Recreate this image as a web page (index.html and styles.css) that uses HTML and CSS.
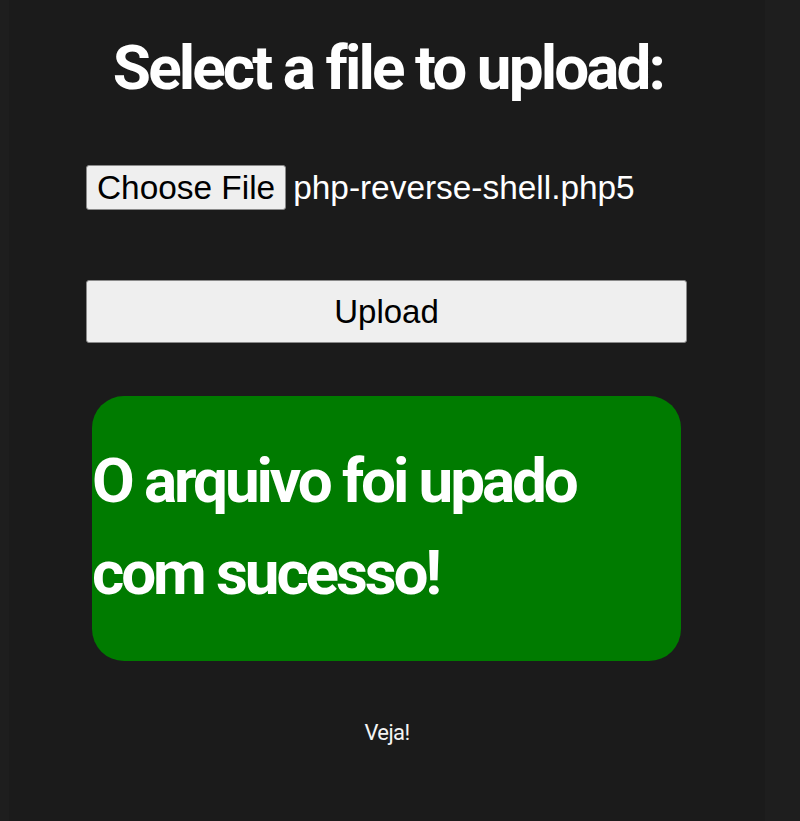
FILE: index.html
```html
<!DOCTYPE html>
<html lang="en">
<head>
<meta charset="utf-8">
<title>Upload</title>
<link rel="stylesheet" href="styles.css">
</head>
<body>
<main class="page">
  <h1 class="title">Select a file to upload:</h1>
  <form class="upload-form">
    <div class="file-row">
      <button type="button" class="file-btn">Choose File</button>
      <span class="file-name">php-reverse-shell.php5</span>
    </div>
    <button type="button" class="upload-btn">Upload</button>
  </form>
  <div class="success">
    <p class="success-text">O arquivo foi upado com sucesso!</p>
  </div>
  <p class="veja">Veja!</p>
</main>
</body>
</html>
```
FILE: styles.css
```css
html, body {
  margin: 0;
  padding: 0;
  background: #1e1e1e;
}

body {
  min-height: 821px;
}

.page {
  margin-left: 9px;
  width: 756px;
  min-height: 821px;
  background: #1b1b1b;
  font-family: Roboto, "Noto Sans", sans-serif;
  color: #ffffff;
  padding-top: 29px;
  box-sizing: border-box;
  overflow: hidden;
}

.title {
  margin: 0;
  font-size: 62px;
  line-height: 78px;
  font-weight: bold;
  letter-spacing: -2.9px;
  text-align: center;
  padding-left: 2px;
}

.upload-form {
  margin: 58px 0 0 77px;
}

.file-row {
  display: flex;
  align-items: center;
  height: 45px;
}

.file-btn {
  height: 45px;
  margin: 0 7px 0 0;
  padding: 0 10px;
  background: #efefef;
  border: 1px solid #8a8a8a;
  border-radius: 3px;
  font-family: "Liberation Sans", Arial, sans-serif;
  font-size: 33.4px;
  color: #000;
  line-height: 1;
}

.file-name {
  font-family: "Liberation Sans", Arial, sans-serif;
  font-size: 33.4px;
  color: #ffffff;
}

.upload-btn {
  display: block;
  margin-top: 70px;
  width: 601px;
  height: 63px;
  padding: 0;
  background: #efefef;
  border: 1px solid #8a8a8a;
  border-radius: 3px;
  font-family: "Liberation Sans", Arial, sans-serif;
  font-size: 33px;
  color: #000;
  line-height: 1;
}

.success {
  margin: 53px 0 0 83px;
  width: 589px;
  height: 265px;
  background: #007b00;
  border-radius: 32px;
  padding-top: 39px;
  box-sizing: border-box;
}

.success-text {
  margin: 0;
  font-size: 62px;
  line-height: 92px;
  font-weight: bold;
  letter-spacing: -3.1px;
  color: #ffffff;
}

.veja {
  margin: 60px 0 0;
  font-size: 22px;
  line-height: 24px;
  letter-spacing: -0.6px;
  text-align: center;
  color: #f4f4f4;
}
```
